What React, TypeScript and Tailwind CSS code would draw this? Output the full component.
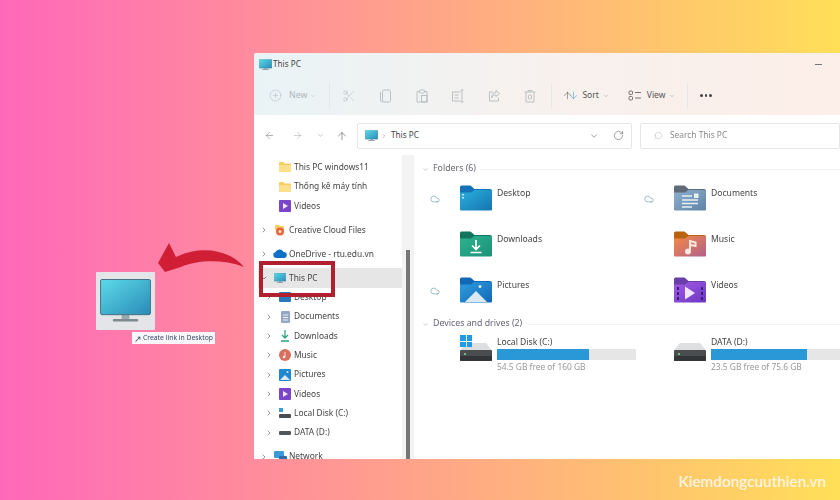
import React, { useId } from 'react';
import { ArrowLeft, ArrowRight, ArrowUp, ArrowDown, ChevronDown, ChevronRight, CirclePlus, Cloud, RotateCw, Scissors, Search } from 'lucide-react';

const Monitor = ({ className }: { className: string }) => {
  const id = useId();
  return (
    <svg viewBox="0 0 52 44" className={className}>
      <defs>
        <linearGradient id={id} x1="0" y1="0" x2="1" y2="1">
          <stop offset="0" stopColor="#5cdbe8" />
          <stop offset="1" stopColor="#2a8ab8" />
        </linearGradient>
      </defs>
      <rect x="22" y="36" width="8" height="5" fill="#9aa8ae" />
      <rect x="13" y="41" width="26" height="2.5" rx="1" fill="#7d8a90" />
      <rect x="0.5" y="0.5" width="51" height="36" rx="1.5" fill={`url(#${id})`} stroke="#46707f" />
    </svg>
  );
};

// big folder icons of the content pane
const Folder = ({ back, from, to, children }: { back: string; from: string; to: string; children?: React.ReactNode }) => {
  const id = useId();
  return (
    <svg viewBox="0 0 32 26" className="w-8 h-[26px] shrink-0">
      <defs>
        <linearGradient id={id} x1="0" y1="0" x2="1" y2="1">
          <stop offset="0" stopColor={from} />
          <stop offset="1" stopColor={to} />
        </linearGradient>
      </defs>
      <path d="M0 2a1.5 1.5 0 0 1 1.5-1.5h9l4 3.5H30a2 2 0 0 1 2 2v4H0z" fill={back} />
      <path d="M0 7.5h11l3.5-2.5H30.500a1.500 1.500 0 0 1 1.500 1.500v18a1 1 0 0 1-1 1H1a1 1 0 0 1-1-1z" fill={`url(#${id})`} />
      {children}
    </svg>
  );
};

const folders = [
  {
    name: 'Desktop', cloud: true,
    icon: <Folder back="#1372b8" from="#2bb0dc" to="#1475b0"><rect x="2" y="9" width="2" height="1.500" fill="#bfe6f5" /><rect x="2" y="12" width="2" height="1.500" fill="#bfe6f5" /></Folder>,
  },
  {
    name: 'Documents', cloud: true,
    icon: <Folder back="#5f6b78" from="#8fb0ce" to="#5f84a6"><path d="M8 11h10M8 15h16M8 18.500h16M8 22h10" stroke="#e8f0f6" strokeWidth="1.300" /><rect x="20" y="8.500" width="4.500" height="4.500" fill="#e8f0f6" /></Folder>,
  },
  {
    name: 'Downloads', cloud: false,
    icon: <Folder back="#12745c" from="#2db48f" to="#1b9079"><path d="M16 9v9M12 14.500l4 4 4-4M10.500 21.500h11" stroke="#fff" strokeWidth="1.700" fill="none" /></Folder>,
  },
  {
    name: 'Music', cloud: false,
    icon: <Folder back="#b9620f" from="#f58a45" to="#b0608c"><circle cx="14" cy="20.500" r="3" fill="#fde7e0" /><path d="M16 20V10l5.500 1.500V15L17 14" stroke="#fde7e0" strokeWidth="2" fill="none" /></Folder>,
  },
  {
    name: 'Pictures', cloud: true,
    icon: <Folder back="#1268b4" from="#2d9fe0" to="#1467b5"><path d="M5 25l11-11 11 11z" fill="#dbe8f7" /><circle cx="20" cy="9.500" r="1.500" fill="#dbe8f7" /></Folder>,
  },
  {
    name: 'Videos', cloud: false,
    icon: <Folder back="#6a3fa8" from="#a45ce6" to="#6a36c2"><path d="M11 9.500l10 6.500-10 6.500z" fill="#f1e4fb" /><path d="M3 10h2v3H3zM3 15h2v3H3zM3 20h2v3H3zM27 10h2v3h-2zM27 15h2v3h-2zM27 20h2v3h-2z" fill="#3d1c7c" /></Folder>,
  },
];

const Drive = () => (
  <svg viewBox="0 0 32 18" className="w-8 h-[18px] block">
    <path d="M6 0h20l6 7.500H0z" fill="#dcdedf" />
    <rect y="7" width="32" height="11" rx="1" fill="#4a4d4f" />
    <rect y="13" width="32" height="5" rx="1" fill="#333638" />
    <circle cx="5" cy="11" r="1" fill="#7fe08a" />
  </svg>
);

const WinLogo = () => (
  <div className="grid grid-cols-2 gap-px w-3 h-3 absolute left-0 -top-2">
    <div className="bg-[#1f9be8]" /><div className="bg-[#1f9be8]" /><div className="bg-[#1f9be8]" /><div className="bg-[#1f9be8]" />
  </div>
);

const drives = [
  { name: 'Local Disk (C:)', free: '54.5 GB free of 160 GB', used: 66, win: true },
  { name: 'DATA (D:)', free: '23.5 GB free of 75.6 GB', used: 69, win: false },
];

const smallFolder = (
  <svg viewBox="0 0 12 10" className="w-3 h-2.5"><path d="M0 1a1 1 0 0 1 1-1h3.500l1 1.500H11a1 1 0 0 1 1 1V9a1 1 0 0 1-1 1H1a1 1 0 0 1-1-1z" fill="#f5cd62" /><path d="M0 3h12v6a1 1 0 0 1-1 1H1a1 1 0 0 1-1-1z" fill="#fbdf8a" /></svg>
);
const smallVideo = (
  <svg viewBox="0 0 12 12" className="w-3 h-3"><rect width="12" height="12" rx="1" fill="#7a45c8" /><path d="M4 3l5 3-5 3z" fill="#f1e4fb" /></svg>
);
const smallDisk = (
  <svg viewBox="0 0 12 6" className="w-3 h-1.5"><rect width="12" height="4" y="1" rx="1" fill="#55585a" /></svg>
);

const navRows: { label: string; level: 0 | 1; chevron?: 'right' | 'down'; gap?: boolean; selected?: boolean; icon: React.ReactNode }[] = [
  { label: 'This PC windows11', level: 1, icon: smallFolder },
  { label: 'Thống kê máy tính', level: 1, icon: smallFolder },
  { label: 'Videos', level: 1, icon: smallVideo },
  {
    label: 'Creative Cloud Files', level: 0, chevron: 'right', gap: true,
    icon: <svg viewBox="0 0 12 12" className="w-3 h-3"><path d="M1 1h4l1 1h4v4H1z" fill="#f5cd62" /><circle cx="6" cy="7.500" r="4" fill="#e8663c" /><circle cx="6" cy="7.500" r="1.500" fill="#fbe0d0" /></svg>,
  },
  {
    label: 'OneDrive - rtu.edu.vn', level: 0, chevron: 'right', gap: true,
    icon: <svg viewBox="0 0 14 9" className="w-3.5 h-[9px]"><path d="M3 9a3 3 0 0 1-.500-5.900A4.500 4.500 0 0 1 10.500 3 3 3 0 0 1 11 9z" fill="#0f6fc6" /></svg>,
  },
  { label: 'This PC', level: 0, chevron: 'down', gap: true, selected: true, icon: <Monitor className="w-3 h-2.5" /> },
  {
    label: 'Desktop', level: 1, chevron: 'right',
    icon: <svg viewBox="0 0 12 10" className="w-3 h-2.5"><rect width="12" height="10" rx="1" fill="#2a78b8" /></svg>,
  },
  {
    label: 'Documents', level: 1, chevron: 'right',
    icon: <svg viewBox="0 0 9 12" className="w-[9px] h-3"><rect width="9" height="12" rx="1" fill="#94a8c4" /><path d="M2 4h5M2 6.500h5M2 9h5" stroke="#e8eef5" /></svg>,
  },
  {
    label: 'Downloads', level: 1, chevron: 'right',
    icon: <svg viewBox="0 0 10 12" className="w-2.5 h-3"><path d="M5 0v8M2 5l3 3 3-3M1 11h8" stroke="#2fa47f" strokeWidth="1.300" fill="none" /></svg>,
  },
  {
    label: 'Music', level: 1, chevron: 'right',
    icon: <svg viewBox="0 0 12 12" className="w-3 h-3"><circle cx="6" cy="6" r="6" fill="#d9705f" /><path d="M6 3v5" stroke="#fbe6e0" /><circle cx="5" cy="8" r="1.300" fill="#fbe6e0" /></svg>,
  },
  {
    label: 'Pictures', level: 1, chevron: 'right',
    icon: <svg viewBox="0 0 12 12" className="w-3 h-3"><rect width="12" height="12" rx="1" fill="#1f86d2" /><path d="M1 11l5-5 5 5z" fill="#dbe8f7" /><circle cx="8.500" cy="3" r="1" fill="#dbe8f7" /></svg>,
  },
  { label: 'Videos', level: 1, chevron: 'right', icon: smallVideo },
  {
    label: 'Local Disk (C:)', level: 1, chevron: 'right',
    icon: <svg viewBox="0 0 12 10" className="w-3 h-2.5"><rect width="4" height="4" fill="#3d9ad8" /><rect y="6" width="12" height="4" rx="1" fill="#4a4d4f" /></svg>,
  },
  { label: 'DATA (D:)', level: 1, chevron: 'right', icon: smallDisk },
  {
    label: 'Network', level: 0, chevron: 'right', gap: true,
    icon: <svg viewBox="0 0 13 11" className="w-[13px] h-[11px]"><rect width="10" height="7" rx="1" fill="#3d9ad8" /><rect x="5" y="5" width="8" height="5" rx="1" fill="#2c6ea5" /></svg>,
  },
];

const NavRow = ({ row }: { row: (typeof navRows)[number] }) => (
  <div className={`h-[19.35px] flex items-center whitespace-nowrap overflow-hidden ${row.gap ? 'mt-[4.7px]' : ''} ${row.selected ? 'bg-[#e6e6e6] ml-[4px]' : ''} ${row.level === 1 ? 'pl-[12px]' : row.selected ? 'pl-[3px]' : 'pl-[7px]'}`}>
    <span className="w-[6px] shrink-0 flex justify-center text-[#555]">
      {row.chevron === 'right' && <ChevronRight size={8} strokeWidth={1.800} className="shrink-0" />}
      {row.chevron === 'down' && <ChevronDown size={8} strokeWidth={2} className="shrink-0" />}
    </span>
    <span className="w-[14px] ml-[6px] shrink-0 flex justify-center items-center">{row.icon}</span>
    <span className="ml-[2px] w-[90px] overflow-hidden text-[8.4px] text-[#444]">{row.label}</span>
  </div>
);

const ToolIcon = ({ children, className }: { children: React.ReactNode; className: string }) => (
  <span className={`flex justify-center text-[#b4bbbf] ${className}`}>{children}</span>
);

const Sep = ({ className }: { className: string }) => <div className={`w-px h-[26px] bg-[#e6e6e6] shrink-0 ${className}`} />;

export default function App() {
  return (
    <div className="relative w-[840px] h-[500px] overflow-hidden bg-[linear-gradient(90deg,#ff68ba_0%,#ffdf58_100%)] pl-[254px] pt-[53px] font-['Noto_Sans',sans-serif]">
      {/* file explorer window */}
      <div className="w-[586px] h-[406px] bg-white rounded-tl-[3px] overflow-hidden flex flex-col blur-[0.4px]">
        <div className="h-[62px] shrink-0 bg-[linear-gradient(90deg,#e9f3f6,#f7f1ee_50%,#fceee8)]">
          <div className="h-[21px] flex items-center pl-[5px] pr-[18px] pt-[1px]">
            <Monitor className="w-[13px] h-[11px]" />
            <span className="ml-[1px] text-[8.2px] text-[#444]">This PC</span>
            <div className="ml-auto w-[7px] h-px bg-[#777]" />
          </div>
          <div className="h-[41px] flex items-center pl-[15px] pt-[2px] text-[#b4bbbf]">
            <CirclePlus size={13} strokeWidth={1} className="shrink-0" />
            <span className="ml-[7px] text-[8.8px] text-[#aeb5b9]">New</span>
            <ChevronDown size={6} strokeWidth={2} className="ml-[3px]" />
            <Sep className="ml-[13px]" />
            <ToolIcon className="w-[37px] ml-0"><Scissors size={14} strokeWidth={1} /></ToolIcon>
            <ToolIcon className="w-[37px]">
              <svg width="14" height="14" viewBox="0 0 14 14" fill="none" stroke="currentColor" strokeWidth="0.900"><rect x="3.500" y="1" width="8" height="12" rx="1.500" /><path d="M1.500 3v8a2 2 0 0 0 2 2" /></svg>
            </ToolIcon>
            <ToolIcon className="w-[36px]">
              <svg width="14" height="14" viewBox="0 0 14 14" fill="none" stroke="currentColor" strokeWidth="0.900"><path d="M4 2.500H2v10.500h10V2.500h-2" /><rect x="4.500" y="1" width="5" height="3" rx="0.800" /><rect x="6.500" y="6.500" width="5.500" height="6.500" /></svg>
            </ToolIcon>
            <ToolIcon className="w-[36px]">
              <svg width="14" height="14" viewBox="0 0 14 14" fill="none" stroke="currentColor" strokeWidth="0.900"><path d="M9.500 3H1.500v9h8M11 1v12M9.500 1h3M9.500 13h3M3.500 6h4M3.500 9h4" /></svg>
            </ToolIcon>
            <ToolIcon className="w-[36px]">
              <svg width="14" height="14" viewBox="0 0 14 14" fill="none" stroke="currentColor" strokeWidth="0.900"><path d="M6 3H2.500v9h9V8.500" /><path d="M9 1.500l3.500 3L9 7.500V6C7 6 5.500 7 4.500 9c0-3 1.500-5 4.500-5.500z" /></svg>
            </ToolIcon>
            <ToolIcon className="w-[36px]">
              <svg width="14" height="14" viewBox="0 0 14 14" fill="none" stroke="currentColor" strokeWidth="0.900"><path d="M1.500 3h11M5 3V1.500h4V3M3 3v10h8V3" /><rect x="5.500" y="6" width="3" height="4" rx="1" /></svg>
            </ToolIcon>
            <Sep className="ml-[3px]" />
            <span className="ml-[10px] flex text-[#555]">
              <ArrowUp size={11} strokeWidth={1.200} className="-mr-[5px]" />
              <ArrowDown size={11} strokeWidth={1.200} className="text-[#3a9ad0]" />
            </span>
            <span className="ml-[3px] text-[8.5px] text-[#555]">Sort</span>
            <ChevronDown size={6} strokeWidth={2} className="ml-[4px] text-[#999]" />
            <svg width="13" height="11" viewBox="0 0 13 11" fill="none" stroke="#666" strokeWidth="0.900" className="ml-[19px]"><rect x="1" y="1" width="3.500" height="3.500" rx="1" /><rect x="1" y="6.500" width="3.500" height="3.500" rx="1" /><path d="M7 2.500h6M7 8h6" /></svg>
            <span className="ml-[6px] text-[8.5px] text-[#555]">View</span>
            <ChevronDown size={6} strokeWidth={2} className="ml-[4px] text-[#999]" />
            <Sep className="ml-[12px]" />
            <span className="ml-[12px] flex gap-[2px]">
              <i className="w-[2.500px] h-[2.500px] rounded-full bg-[#444]" />
              <i className="w-[2.500px] h-[2.500px] rounded-full bg-[#444]" />
              <i className="w-[2.500px] h-[2.500px] rounded-full bg-[#444]" />
            </span>
          </div>
        </div>

        {/* address row */}
        <div className="h-[40px] shrink-0 flex items-center pl-[10px] pt-[1px]">
          <ArrowLeft size={11} strokeWidth={1.200} className="text-[#777] shrink-0" />
          <ArrowRight size={11} strokeWidth={1.200} className="text-[#aaa] ml-[17px] shrink-0" />
          <ChevronDown size={7} strokeWidth={1.600} className="text-[#888] ml-[14px] shrink-0" />
          <ArrowUp size={12} strokeWidth={1.200} className="text-[#555] ml-[12px] shrink-0" />
          <div className="ml-[9px] w-[275px] h-[26px] shrink-0 border border-[#e6e6e6] rounded-[2px] flex items-center pl-[7px] pr-[7px]">
            <Monitor className="w-[13px] h-[11px]" />
            <ChevronRight size={6} strokeWidth={1.800} className="ml-[3px] text-[#777]" />
            <span className="ml-[4px] text-[8.2px] text-[#444]">This PC</span>
            <ChevronDown size={10} strokeWidth={1.500} className="ml-auto mr-[14px] text-[#666]" />
            <RotateCw size={11} strokeWidth={1.300} className="text-[#666]" />
          </div>
          <div className="ml-[8px] flex-1 h-[26px] border border-[#e6e6e6] rounded-[2px] flex items-center pl-[12px]">
            <Search size={10} strokeWidth={1} className="text-[#aaa] -scale-x-100" />
            <span className="ml-[7px] text-[8.400px] text-[#8a8a8a]">Search This PC</span>
          </div>
        </div>

        <div className="flex-1 min-h-0 flex">
          {/* nav pane */}
          <div className="w-[148px] shrink-0 pt-[2.500px] overflow-hidden">
            {navRows.map((row, i) => (
              <NavRow key={i} row={row} />
            ))}
          </div>
          <div className="w-[12px] shrink-0 bg-[#f3f3f3] pt-[95px] pl-[4px] pr-[4px]">
            <div className="h-full bg-[#777]" />
          </div>

          {/* content */}
          <div className="flex-1 min-w-0 pl-[8px] pt-[7px] overflow-hidden">
            <div className="flex items-center h-[14px]">
              <ChevronDown size={7} strokeWidth={1.400} className="text-[#888] shrink-0" />
              <span className="ml-[4px] text-[8.8px] text-[#667] whitespace-nowrap">Folders (6)</span>
              <div className="ml-[4px] flex-1 h-px bg-[#eee]" />
            </div>
            <div className="mt-[9px] grid grid-cols-[214px_214px] gap-y-[20px]">
              {folders.map((f) => (
                <div key={f.name} className="flex h-[26px] relative">
                  <span className="w-[38px] shrink-0 pt-[9px] pl-[8px] text-[#4f8a9e]">
                    {f.cloud && <Cloud size={10} strokeWidth={1.300} />}
                  </span>
                  {f.icon}
                  <span className="ml-[5px] pt-[1px] text-[8.600px] leading-[14px] text-[#444]">{f.name}</span>
                </div>
              ))}
            </div>
            <div className="mt-[14px] flex items-center h-[14px]">
              <ChevronDown size={7} strokeWidth={1.400} className="text-[#888] shrink-0" />
              <span className="ml-[4px] text-[8.800px] text-[#667] whitespace-nowrap">Devices and drives (2)</span>
              <div className="ml-[5px] flex-1 h-px bg-[#f3f3f3]" />
            </div>
            <div className="mt-[5px] grid grid-cols-[214px_214px]">
              {drives.map((d) => (
                <div key={d.name} className="flex pl-[38px]">
                  <div className="relative w-8 shrink-0 pt-[7px]">
                    {d.win && <div className="absolute top-[7px] left-0"><WinLogo /></div>}
                    <Drive />
                  </div>
                  <div className="ml-[5px] w-[139px] shrink-0">
                    <div className="text-[8.600px] leading-[12px] text-[#444] whitespace-nowrap">{d.name}</div>
                    <div className="mt-[1px] h-[11px] bg-[#e6e6e6]">
                      <div className="h-full bg-[#2a98d6]" style={{ width: `${d.used}%` }} />
                    </div>
                    <div className="mt-[1px] text-[8.400px] leading-[12px] text-[#999] whitespace-nowrap">{d.free}</div>
                  </div>
                </div>
              ))}
            </div>
          </div>
        </div>
      </div>

      <div className="h-[41px] pt-[4px] flex items-center justify-end pr-[14px] font-['Lato',sans-serif] font-semibold text-[15.300px] text-[#fff3e0]">
        Kiemdongcuuthien.vn
      </div>

      {/* red highlight over the nav row */}
      <div className="absolute left-[259px] top-[261px] w-[76px] h-[36px] border-[4px] border-[#b0202f] blur-[0.3px]" />

      {/* curved arrow */}
      <svg viewBox="0 0 840 500" className="absolute inset-0 w-[840px] h-[500px] pointer-events-none">
        <path d="M158 263 L169 243 L176 257 C198 246 228 248 244 267 C222 259 198 260 181 267 L165 272 Z" fill="#d01f35" />
      </svg>

      {/* dragged desktop icon */}
      <div className="absolute left-[96px] top-[272px] w-[59px] h-[58px] bg-[#e4e5e8] rounded-[1px] pt-[7px] px-[4px]">
        <Monitor className="w-[51px] h-[43px]" />
      </div>
      <div className="absolute left-[132px] top-[332px] w-[83px] h-[12px] bg-[#f5f5fa] flex items-center pl-[2px] text-[6.800px] text-[#3c4a66] whitespace-nowrap">
        <span className="mr-[1px] text-[9px] leading-[9px]">↗</span>Create link in Desktop
      </div>
    </div>
  );
}
